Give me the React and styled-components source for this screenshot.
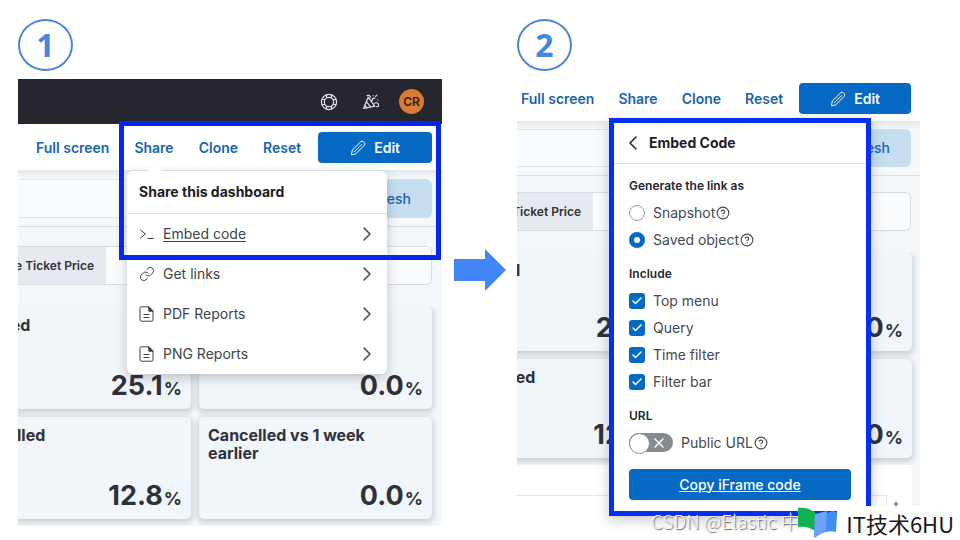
import React from "react";
import styled, { createGlobalStyle, css } from "styled-components";
import { Check, ChevronLeft, ChevronRight, CircleHelp, Link, X } from "lucide-react";

const GlobalStyle = createGlobalStyle`
  * {
    box-sizing: border-box;
  }

  body {
    margin: 0;
    background: #fff;
    color: #2e3138;
    font-family: Inter, "Liberation Sans", sans-serif;
    font-size: 14px;
    line-height: 20px;
  }

  button, input {
    font: inherit;
    margin: 0;
  }
`

const Page = styled.main`
  position: relative;
  min-height: 100vh;
  display: grid;
  grid-template-columns: minmax(0, 424fr) 75px minmax(0, 403fr);
  padding: 0 40px 0 18px;
  overflow: hidden;
`

const Step = styled.section`
  padding-top: 19px;
`

const StepNumber = styled.h2`
  width: 55px;
  height: 52px;
  margin: 0 0 8px;
  display: flex;
  align-items: center;
  justify-content: center;
  border: 2px solid #4a86dc;
  border-radius: 50%;
  color: #4486e4;
  font: bold 32px/48px "Open Sans", "Noto Sans", sans-serif;
`

const ArrowIcon = styled.svg`
  align-self: center;
  margin-left: 12px;
`

const Screen = styled.div`
  position: relative;
  background: #f3f7fa;
`

const TopBar = styled.header`
  height: 45px;
  display: flex;
  align-items: center;
  justify-content: flex-end;
  gap: 24px;
  padding-right: 18px;
  background: #25262e;
  color: #e4e6ea;
`

const IconButton = styled.button`
  display: flex;
  padding: 0;
  border: 0;
  background: none;
  color: inherit;
`

const Avatar = styled.span`
  width: 25px;
  height: 25px;
  margin-left: -5px;
  border-radius: 50%;
  background: #d87c33;
  color: #2a1c14;
  font-size: 12px;
  font-weight: 600;
  line-height: 25px;
  text-align: center;
`

const Nav = styled.nav`
  display: flex;
  align-items: center;
  justify-content: flex-end;
  gap: ${props => props.$compact ? "16px" : "17px"};
  padding: ${props => props.$compact ? "4px 9px 7px" : "8px 10px 7px"};
  background: #fff;
`

const NavLinks = styled.div`
  display: flex;
  gap: ${props => props.$compact ? "24px" : "25px"};
`

const NavLink = styled.a`
  color: #1a64a8;
  font-weight: 600;
  text-decoration: none;
  white-space: nowrap;
`

const PrimaryButton = styled.button`
  height: 31px;
  display: flex;
  align-items: center;
  justify-content: center;
  gap: 8px;
  padding: 0 ${props => props.$compact ? "31px" : "32px"};
  border: 0;
  border-radius: 4px;
  background: #066ac4;
  color: #fff;
  font-weight: 600;

  ${props => props.$full && css`
    width: 100%;
    font-weight: 500;
    text-decoration: underline;
  `}
`

const QueryBar = styled.div`
  display: flex;
  gap: 8px;
  padding: ${props => props.$compact ? "8px 9px 8px 0" : "9px 10px 8px 0"};
  border-bottom: 1px solid #d8dde3;
  background: linear-gradient(#e2e6ea, #f6f9fb 8px);
`

const QueryInput = styled.input`
  flex: 1;
  min-width: 0;
  height: ${props => props.$compact ? "38px" : "39px"};
  border: 1px solid #dfe4e9;
  border-left: 0;
  background: #f9fcfe;
`

const RefreshButton = styled.button`
  padding: 0 21px 0 44px;
  border: 0;
  border-radius: 6px;
  background: #c5dff1;
  color: #1a64a8;
  font-weight: 500;
`

const Control = styled.label`
  display: flex;
  height: 39px;
  margin: ${props => props.$compact ? "16px 9px 21px 0" : "19px 10px 22px 0"};
  border: 1px solid #d7dbe1;
  border-left: 0;
  border-radius: 0 6px 6px 0;
  overflow: hidden;
`

const ControlName = styled.span`
  width: ${props => props.$compact ? "76px" : "88px"};
  display: flex;
  align-items: center;
  justify-content: flex-end;
  padding-right: 12px;
  overflow: hidden;
  background: #e6e9f0;
  font-size: 12px;
  font-weight: 600;
  white-space: nowrap;
`

const ControlInput = styled.input`
  flex: 1;
  min-width: 0;
  border: 0;
  background: #fafcfe;
`

// the grid hangs off the left edge of the screen, which clips it
const Tiles = styled.div`
  display: grid;
  grid-template-columns: repeat(2, ${props => props.$compact ? "228px" : "233px"});
  grid-auto-rows: ${props => props.$compact ? "99px" : "102px"};
  justify-content: end;
  gap: 8px;
  padding: 0 ${props => props.$compact ? "8px" : "10px"} 7px 0;
`

const Clip = styled.div`
  overflow: hidden;
`

const Tile = styled.article`
  display: flex;
  flex-direction: column;
  justify-content: space-between;
  padding: 9px 9px 6px;
  border-radius: 5px;
  background: #f1f6fa;
  box-shadow: 0 2px 5px 2px rgba(60, 70, 80, 0.2);
`

const TileTitle = styled.h3`
  margin: 0;
  padding-right: 40px;
  font-size: 16px;
  font-weight: 700;
  line-height: 18px;
`

const TileValue = styled.p`
  margin: 0;
  font-size: 27px;
  font-weight: 700;
  line-height: 28px;
  text-align: right;

  small {
    margin-left: 1px;
    font-size: 18px;
  }
`

const ChartPanel = styled.div`
  height: 50px;
  display: flex;
  align-items: flex-end;
  justify-content: space-between;
  margin-right: 8px;
  padding-right: 14px;
  border-radius: 0 5px 0 0;
  background: #fff;
`

const ChartGrid = styled.div`
  width: 370px;
  height: 20px;
  border: 1px solid #e3e5e8;
  border-width: 1px 1px 0 0;
`

const Handle = styled.span`
  width: 4px;
  height: 4px;
  margin-bottom: 9px;
  border-radius: 50%;
  background: #8c9096;
`

const Popover = styled.div`
  position: absolute;
  background: #fff;
  box-shadow: 0 4px 12px rgba(30, 40, 50, 0.25);
`

const SharePopover = styled(Popover)`
  top: 92px;
  right: 55px;
  width: 260px;
  border-radius: 6px;

  &:before {
    content: "";
    position: absolute;
    top: -7px;
    left: 20px;
    border: solid transparent;
    border-width: 0 8px 8px;
    border-bottom-color: #fff;
  }
`

const EmbedPopover = styled(Popover)`
  top: 39px;
  right: 49px;
  width: 262px;
  border: 5px solid #0730ee;
`

const Highlight = styled.div`
  position: absolute;
  top: 42px;
  right: 1px;
  width: 322px;
  height: 139px;
  border: 5px solid #0726ee;
  pointer-events: none;
`

const PopoverTitle = styled.h3`
  height: 43px;
  margin: 0;
  padding: 0 12px;
  border-bottom: 1px solid #dfe2e6;
  color: #1e2026;
  font-size: 14px;
  font-weight: 700;
  line-height: 42px;
`

const BackTitle = styled(PopoverTitle)`
  height: 41px;
  display: flex;
  align-items: center;
  gap: 4px;
  padding: 0 7px;
  line-height: 20px;
`

const Menu = styled.ul`
  margin: 0;
  padding: 0;
  list-style: none;
`

const MenuItem = styled.button`
  width: 100%;
  height: 40px;
  display: flex;
  align-items: center;
  gap: 8px;
  padding: 0 8px 0 12px;
  border: 0;
  background: none;
  color: #404349;
  text-align: left;
`

const MenuLabel = styled.span`
  flex: 1;
  text-decoration: ${props => props.$active ? "underline" : "none"};
  text-underline-offset: 2px;
`

const Form = styled.form`
  padding: 14px 15px 11px;
`

const Group = styled.fieldset`
  margin: 0 0 13px;
  padding: 0;
  border: 0;
`

const Legend = styled.legend`
  margin-bottom: 5px;
  padding: 0;
  color: #25272d;
  font-size: 12px;
  font-weight: 600;
  line-height: 16px;
`

const OptionRow = styled.div`
  height: 27px;
  display: flex;
  align-items: center;
  color: #45484f;

  label {
    padding: 0 1px 0 8px;
  }
`

const Mark = styled.span`
  display: grid;
  color: #fff;

  > * {
    grid-area: 1 / 1;
    place-self: center;
  }

  svg {
    pointer-events: none;
  }
`

const Tick = styled.input`
  appearance: none;
  width: 16px;
  height: 16px;
  border-radius: 3px;
  background: #066ac4;
`

const Radio = styled.input`
  appearance: none;
  width: 16px;
  height: 16px;
  border: 1px solid #999ca2;
  border-radius: 50%;
  background: #fff;

  &:checked {
    border: 5px solid #066ac4;
  }
`

const Toggle = styled.input`
  appearance: none;
  width: 44px;
  height: 19px;
  border-radius: 10px;
  background: #868a91;

  &:before {
    content: "";
    display: block;
    width: 19px;
    height: 19px;
    border: 1px solid #868a91;
    border-radius: 50%;
    background: #fff;
  }
`

const ToggleMark = styled(Mark)`
  > svg {
    justify-self: end;
    margin-right: 6px;
  }
`

const Credit = styled.p`
  position: absolute;
  right: 160px;
  bottom: 6px;
  margin: 0;
  color: #f4f4f4;
  font: 300 19px/26px "Noto Sans CJK SC", sans-serif;
  text-shadow: 1px 1px 1px #666;
`

const SiteMark = styled.div`
  position: absolute;
  right: 0;
  bottom: 0;
  height: 34px;
  display: flex;
  align-items: center;
  gap: 8px;
  padding-right: 6px;
  background: linear-gradient(90deg, transparent 40px, #fff 40px);
  color: #17191c;
  font: 22px/34px "Noto Sans CJK SC", sans-serif;
`

const PencilIcon = () => (
  <svg width="16" height="16" viewBox="0 0 16 16" fill="none" stroke="currentColor" strokeLinejoin="round" strokeLinecap="round">
    <path d="M1.5 14.5 2.3 10 10.6 1.9a2.1 2.1 0 0 1 3 0l.5.5a2.1 2.1 0 0 1 0 3L6 13.6z" />
    <path d="M4.3 11.8l7.2-7.2" />
  </svg>
)

const RingIcon = () => (
  <svg width="18" height="18" viewBox="0 0 18 18" fill="none" stroke="currentColor" strokeWidth="1.2">
    <circle cx="9" cy="9" r="7.6" />
    <circle cx="9" cy="9" r="4.7" />
    <path d="M6.5 1.8v3.3M11.5 1.8v3.3M6.5 12.9v3.3M11.5 12.9v3.3M1.8 6.5h3.3M1.8 11.5h3.3M12.9 6.5h3.3M12.9 11.5h3.3" />
  </svg>
)

const CheerIcon = () => (
  <svg width="18" height="18" viewBox="0 0 18 18" fill="none" stroke="currentColor" strokeWidth="1.2" strokeLinejoin="round" strokeLinecap="round">
    <path d="M1.5 15.5 6.2 4.2l6.6 9zM4.4 8.7l4.3 5.4M2.8 12.2l2.3 2.9" />
    <path d="M5.2 2.6c1.5-.8 2.8 0 3.4 1.6M9.8 8c.2-1.9 1.2-2.8 3-2.8M12.6 10.2c1.8-1 3.9-.2 4 1.7 0 1.5-1 2-1.9 1.7M11.3 2.6v.2M14.8 2.2l-1.2 1.2M15.8 6.8v.1" />
  </svg>
)

const PromptIcon = () => (
  <svg width="16" height="16" viewBox="0 0 16 16" fill="none" stroke="currentColor" strokeLinecap="round" strokeLinejoin="round">
    <path d="m1.5 4 5 4-5 4M9 12.5h5.5" />
  </svg>
)

const DocumentIcon = () => (
  <svg width="16" height="16" viewBox="0 0 16 16" fill="none" stroke="currentColor" strokeLinejoin="round">
    <path d="M2 .8h8l4 4v9.4a1 1 0 0 1-1 1H2a1 1 0 0 1-1-1V1.8a1 1 0 0 1 1-1z" />
    <path d="M9.8.8v4.4H14z" fill="currentColor" />
    <path d="M4.5 8.5h6M4.5 11.5h6" />
  </svg>
)

const BooksIcon = () => (
  <svg width="41" height="32" viewBox="0 0 41 32">
    <path d="M1 1c6-1 12 1 17 4v19C13 20 7 19 1 20z" fill="#12b34f" />
    <path d="M18 7c6 1 11 0 17-3l5 1-1 20c-8-2-14 0-22 6z" fill="#3f8cf3" />
    <path d="M18 7 30 4l-1 20-12 7z" fill="#6ba2fa" />
  </svg>
)

const HelpIcon = () => <CircleHelp size={14} strokeWidth={2} aria-label="Help" />

const menuItems = [
  { label: "Embed code", icon: <PromptIcon />, active: true },
  { label: "Get links", icon: <Link size={16} strokeWidth={1.5} /> },
  { label: "PDF Reports", icon: <DocumentIcon /> },
  { label: "PNG Reports", icon: <DocumentIcon /> }
]

const tiles = [
  { title: "Delayed", value: "25.1" },
  { title: "", value: "0.0" },
  { title: "Cancelled", value: "12.8" },
  { title: "Cancelled vs 1 week earlier", value: "0.0" }
]

const Dashboard = ({ compact }) => (
  <>
    <Nav $compact={compact}>
      <NavLinks $compact={compact}>
        {["Full screen", "Share", "Clone", "Reset"].map(name => (
          <NavLink key={name} href="#">{name}</NavLink>
        ))}
      </NavLinks>
      <PrimaryButton $compact={compact}><PencilIcon />Edit</PrimaryButton>
    </Nav>
    <QueryBar $compact={compact}>
      <QueryInput $compact={compact} aria-label="Query" />
      <RefreshButton>Refresh</RefreshButton>
    </QueryBar>
    <Control $compact={compact}>
      <ControlName $compact={compact}>Average Ticket Price</ControlName>
      <ControlInput />
    </Control>
    <Clip>
      <Tiles $compact={compact}>
        {tiles.map((tile, i) => (
          <Tile key={i}>
            <TileTitle>{tile.title}</TileTitle>
            <TileValue>{tile.value}<small>%</small></TileValue>
          </Tile>
        ))}
      </Tiles>
    </Clip>
  </>
)

const Option = ({ id, label, help, children }) => (
  <OptionRow>
    {children}
    <label htmlFor={id}>{label}</label>
    {help && <HelpIcon />}
  </OptionRow>
)

const EmbedForm = () => (
  <Form onSubmit={e => e.preventDefault()}>
    <Group>
      <Legend>Generate the link as</Legend>
      <Option id="snapshot" label="Snapshot" help>
        <Radio type="radio" name="source" id="snapshot" />
      </Option>
      <Option id="saved" label="Saved object" help>
        <Radio type="radio" name="source" id="saved" defaultChecked />
      </Option>
    </Group>
    <Group>
      <Legend>Include</Legend>
      {["Top menu", "Query", "Time filter", "Filter bar"].map(name => (
        <Option key={name} id={name} label={name}>
          <Mark>
            <Tick type="checkbox" id={name} defaultChecked />
            <Check size={12} strokeWidth={3} />
          </Mark>
        </Option>
      ))}
    </Group>
    <Group>
      <Legend>URL</Legend>
      <Option id="public" label="Public URL" help>
        <ToggleMark>
          <Toggle type="checkbox" role="switch" id="public" />
          <X size={16} strokeWidth={2} />
        </ToggleMark>
      </Option>
    </Group>
    <PrimaryButton $full>Copy iFrame code</PrimaryButton>
  </Form>
)

const App = () => (
  <>
    <GlobalStyle />
    <Page>
      <Step>
        <StepNumber>1</StepNumber>
        <Screen>
          <TopBar>
            <IconButton aria-label="Help"><RingIcon /></IconButton>
            <IconButton aria-label="What's new"><CheerIcon /></IconButton>
            <Avatar>CR</Avatar>
          </TopBar>
          <Dashboard />
          <SharePopover>
            <PopoverTitle>Share this dashboard</PopoverTitle>
            <Menu>
              {menuItems.map(item => (
                <li key={item.label}>
                  <MenuItem>
                    {item.icon}
                    <MenuLabel $active={item.active}>{item.label}</MenuLabel>
                    <ChevronRight size={24} strokeWidth={1.5} />
                  </MenuItem>
                </li>
              ))}
            </Menu>
          </SharePopover>
          <Highlight />
        </Screen>
      </Step>
      <ArrowIcon width="52" height="42" viewBox="0 0 52 42">
        <path d="M0 10h31V0l21 21-21 21V32H0z" fill="#4285f4" />
      </ArrowIcon>
      <Step>
        <StepNumber>2</StepNumber>
        <Screen>
          <Dashboard compact />
          <ChartPanel>
            <ChartGrid />
            <Handle />
          </ChartPanel>
          <EmbedPopover>
            <BackTitle>
              <IconButton aria-label="Back"><ChevronLeft size={24} strokeWidth={1.5} /></IconButton>
              Embed Code
            </BackTitle>
            <EmbedForm />
          </EmbedPopover>
        </Screen>
      </Step>
      <Credit>CSDN @Elastic 中</Credit>
      <SiteMark><BooksIcon />IT技术6HU</SiteMark>
    </Page>
  </>
)

export default App;
